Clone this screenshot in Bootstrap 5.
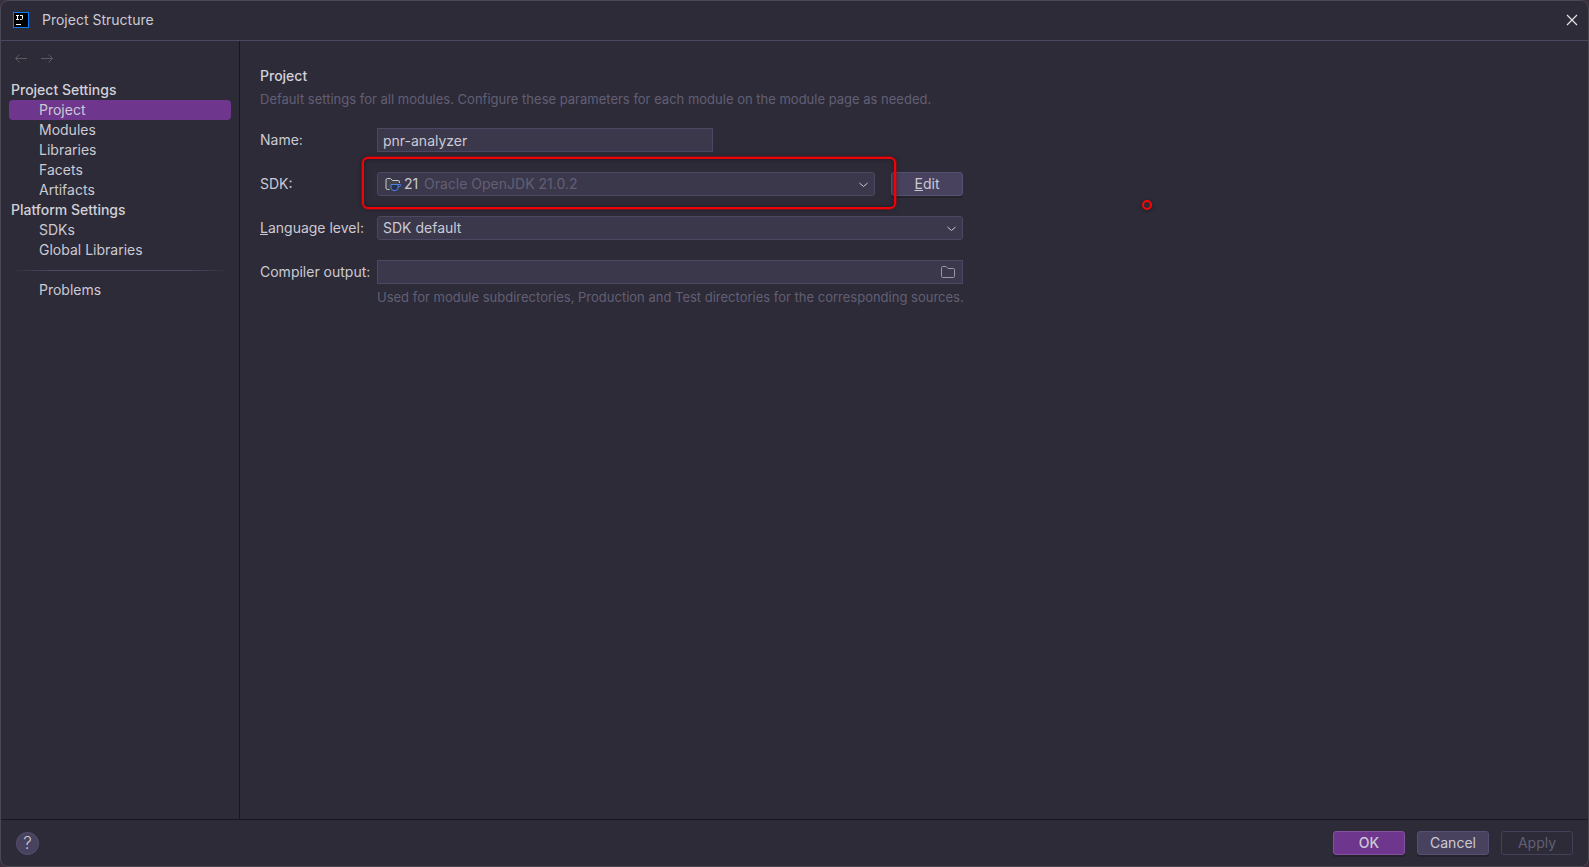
<!DOCTYPE html>
<html lang="en" data-bs-theme="dark">
<head>
<meta charset="utf-8">
<meta name="viewport" content="width=device-width, initial-scale=1">
<title>Project Structure</title>
<link rel="stylesheet" href="https://cdn.jsdelivr.net/npm/bootstrap@5.3.0/dist/css/bootstrap.min.css">
<style>
  :root {
    --win: #2d2b38;
    --field: #3b384c;
    --field-line: #4c4863;
    --ink: #cbcad3;
    --dim: #625f75;
    --accent: #6e378d;
    --rule: #191622;
  }
  body {
    background: #3a2f3c;
    color: var(--ink);
    font-family: Inter, "Liberation Sans", sans-serif;
    font-size: 14px;
    line-height: 20px;
  }
  .window { background: var(--win); border: 1px solid #4a4852; border-radius: 8px; overflow: hidden; }
  .titlebar { height: 40px; padding: 0 10px 1px 11px; border-bottom: 1px solid #4b4861; }
  .icon-btn { background: none; border: 0; padding: 0; line-height: 0; color: #5c5b60; }
  .icon-btn.close-btn { color: #e4e4e8; }
  .sidebar { width: 239px; border-right: 1px solid var(--rule); padding: 9px 8px 0; }
  .history { gap: 10px; padding: 0 4px; height: 16px; margin-bottom: 14px; }
  .group-title { padding-left: 2px; font-size: 14px; font-weight: 500; line-height: 20px; margin: 0; color: #d2d1d9; }
  .side-link { display: block; padding-left: 30px; color: var(--ink); text-decoration: none; border-radius: 4px; }
  .side-link.active { background: var(--accent); }
  .fade-rule { height: 1px; margin: 10px 0 9px; background: linear-gradient(90deg, transparent, #4f4b68 20%, #4f4b68 80%, transparent); }
  .content { padding: 25px 20px 0; }
  .content h1 { font-size: 14px; font-weight: 500; line-height: 20px; margin: 0; color: #d2d1d9; }
  .hint { color: var(--dim); font-size: 13px; line-height: 18px; margin: 4px 0 0; white-space: nowrap; }
  .settings { display: grid; grid-template-columns: 117px minmax(0, 586px); row-gap: 20px; margin-top: 20px; line-height: 24px; }
  .field {
    width: 100%; height: 24px; padding: 0 5px; line-height: 22px;
    color: var(--ink); background: var(--field); border: 1px solid var(--field-line);
    border-radius: 0; appearance: none; outline: 0; display: block;
  }
  select.field { border-radius: 3px; }
  .name-field { width: 336px; }
  .sdk-field { padding-left: 26px; }
  .sdk-overlay { inset: 0 auto 0 8px; gap: 4px; pointer-events: none; }
  .sdk-name { color: var(--dim); padding-left: 19px; }
  .end-icon { right: 4px; top: 4px; pointer-events: none; }
  .marker { inset: -15px -21px -13px -15px; border: 2px solid #ee0408; border-radius: 6px; box-shadow: 0 0 0 1px #d0081066, 0 0 5px #0006, inset 0 0 5px #0006; pointer-events: none; z-index: 2; }
  .dot { width: 10px; height: 10px; left: 66.9%; top: 159px; border: 2px solid #fb0508; border-radius: 50%; box-shadow: 0 1px 4px #0006; }
  .action {
    width: 72px; height: 24px; padding: 0; font-size: 14px; line-height: 22px; color: var(--ink);
    background: #48425f; border: 1px solid #565072; border-radius: 3px; box-shadow: 0 2px 0 #24232b;
  }
  .action:hover { color: var(--ink); background: #504a69; border-color: #565072; }
  .action.primary { background: var(--accent); border-color: #84509f; font-weight: 500; }
  .action:disabled { background: transparent; border-color: #444058; color: var(--dim); box-shadow: none; opacity: 1; }
  .action-row { gap: 12px; }
  .footer-bar { height: 47px; border-top: 1px solid var(--rule); padding: 0 15px; }
  .help { width: 23px; height: 23px; padding: 0; border: 1px solid #565072; border-radius: 50%; background: #48425f; color: var(--ink); font-size: 17px; font-weight: 300; line-height: 21px; }
  svg { display: block; fill: none; stroke: currentColor; }
  .folder-icon { right: 8px; top: 4px; color: #9a98a5; pointer-events: none; }
</style>
</head>
<body>
<div class="window vh-100 d-flex flex-column">
  <header class="titlebar d-flex align-items-center flex-shrink-0">
    <svg width="18" height="16" viewBox="0 0 18 16" aria-hidden="true">
      <rect x="1.5" y=".5" width="15" height="15" fill="#000" stroke="#087cfa"/>
      <path d="M4 3.500h3M5.500 3.500v4M4 7.500h3M8 3.500h2.500v3q0 1-1 1H8M4 12.500h5" stroke="#fff"/>
    </svg>
    <span class="ms-2 ps-1">Project Structure</span>
    <button class="icon-btn close-btn ms-auto" aria-label="Close">
      <svg width="12" height="12" viewBox="0 0 12 12" stroke-width="1.200"><path d="M1 1l10 10M11 1L1 11"/></svg>
    </button>
  </header>

  <div class="d-flex flex-grow-1">
    <nav class="sidebar flex-shrink-0" aria-label="Settings sections">
      <div class="history d-flex align-items-center">
        <button class="icon-btn" aria-label="Back" disabled><svg width="16" height="16" viewBox="0 0 16 16"><path d="M14 8.500H2.500M6.500 4.500l-4 4 4 4"/></svg></button>
        <button class="icon-btn" aria-label="Forward" disabled><svg width="16" height="16" viewBox="0 0 16 16"><path d="M2 8.500h11.500M9.500 4.500l4 4-4 4"/></svg></button>
      </div>
      <h2 class="group-title">Project Settings</h2>
      <a class="side-link active" href="#project" aria-current="page">Project</a>
      <a class="side-link" href="#modules">Modules</a>
      <a class="side-link" href="#libraries">Libraries</a>
      <a class="side-link" href="#facets">Facets</a>
      <a class="side-link" href="#artifacts">Artifacts</a>
      <h2 class="group-title">Platform Settings</h2>
      <a class="side-link" href="#sdks">SDKs</a>
      <a class="side-link" href="#global">Global Libraries</a>
      <div class="fade-rule"></div>
      <a class="side-link" href="#problems">Problems</a>
    </nav>

    <main class="content flex-grow-1 position-relative" id="project">
      <h1>Project</h1>
      <p class="hint">Default settings for all modules. Configure these parameters for each module on the module page as needed.</p>

      <form class="settings">
        <label for="name">Name:</label>
        <div><input class="field name-field" id="name" type="text" value="pnr-analyzer"></div>

        <label for="sdk">SDK:</label>
        <div class="d-flex gap-3">
          <div class="position-relative flex-grow-1">
            <select class="field sdk-field" id="sdk"><option>21</option></select>
            <div class="sdk-overlay position-absolute d-flex align-items-center">
              <svg width="16" height="16" viewBox="0 0 16 16" aria-hidden="true">
                <path d="M4.500 13.500h-2q-1.500 0-1.500-1.500V4q0-1.500 1.500-1.500h3L7.500 4.500h5.500q1.500 0 1.500 1.500v1" stroke="#c9cad2" fill="#43434a"/>
                <path d="M6 8.500h7v3q0 3-3 3h-1q-3 0-3-3zM13 8.500h2.500v1q0 1.500-2.500 1.500" stroke="#4d7fe8" fill="#25324d"/>
              </svg>
              <span class="sdk-name">Oracle OpenJDK 21.0.2</span>
            </div>
            <svg class="end-icon position-absolute" width="16" height="16" viewBox="0 0 16 16"><path d="M4.500 7l4 3.500 4-3.500"/></svg>
            <div class="marker position-absolute"></div>
          </div>
          <button class="btn action flex-shrink-0" type="button"><u>E</u>dit</button>
        </div>

        <label for="level"><u>L</u>anguage level:</label>
        <div class="position-relative">
          <select class="field" id="level"><option>SDK default</option></select>
          <svg class="end-icon position-absolute" width="16" height="16" viewBox="0 0 16 16"><path d="M4.500 7l4 3.500 4-3.500"/></svg>
        </div>

        <label for="output">Compiler output:</label>
        <div>
          <div class="position-relative">
            <input class="field" id="output" type="text">
            <svg class="folder-icon position-absolute" width="14" height="16" viewBox="0 0 14 16"><path d="M.5 3.500q0-1 1-1h3.500l2 2h5.500q1 0 1 1v7q0 1-1 1h-11q-1 0-1-1z"/></svg>
          </div>
          <p class="hint">Used for module subdirectories, Production and Test directories for the corresponding sources.</p>
        </div>
      </form>
      <div class="dot position-absolute"></div>
    </main>
  </div>

  <footer class="footer-bar d-flex align-items-center flex-shrink-0">
    <button class="help" type="button" aria-label="Help">?</button>
    <div class="action-row d-flex ms-auto">
      <button class="btn action primary" type="button">OK</button>
      <button class="btn action" type="button">Cancel</button>
      <button class="btn action" type="button" disabled>Apply</button>
    </div>
  </footer>
</div>
<script src="https://cdn.jsdelivr.net/npm/bootstrap@5.3.0/dist/js/bootstrap.bundle.min.js"></script>
</body>
</html>
